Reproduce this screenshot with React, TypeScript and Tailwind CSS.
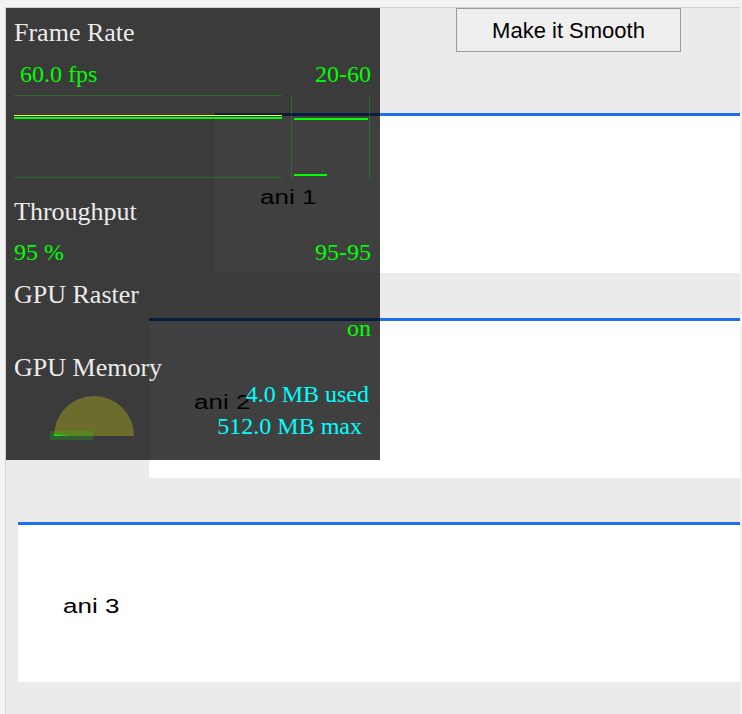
const serif = "font-['Liberation_Serif','Times_New_Roman',serif]";
const sans = "font-['Liberation_Sans',Arial,sans-serif]";

const GREEN_LINE = "rgba(0,255,0,0.22)";

function FrameGraph() {
  return (
    <svg width="358" height="86" viewBox="0 0 358 86" className="block">
      <line x1="0" y1="0.5" x2="268" y2="0.5" stroke={GREEN_LINE} strokeWidth="1" />
      <line x1="0" y1="82.5" x2="268" y2="82.5" stroke={GREEN_LINE} strokeWidth="1" />
      <line x1="0" y1="20.5" x2="268" y2="20.5" stroke="#f2f23a" strokeWidth="1" />
      <rect x="0" y="22" width="268" height="2" fill="#00ff00" />
      <line x1="277.5" y1="1" x2="277.5" y2="85" stroke={GREEN_LINE} strokeWidth="1" />
      <line x1="355.5" y1="1" x2="355.5" y2="85" stroke={GREEN_LINE} strokeWidth="1" />
      <rect x="280" y="23" width="74" height="2" fill="#00ff00" />
      <rect x="280" y="79" width="33" height="2" fill="#00ff00" />
    </svg>
  );
}

function MemoryGauge() {
  return (
    <svg width="130" height="60" viewBox="0 0 130 60" className="block shrink-0">
      <defs>
        <linearGradient id="usedFade" x1="0" x2="1" y1="0" y2="0">
          <stop offset="0" stopColor="#00ff00" stopOpacity="1" />
          <stop offset="1" stopColor="#00ff00" stopOpacity="0" />
        </linearGradient>
      </defs>
      <path d="M40 54 A40 40 0 0 1 120 54 Z" fill="rgba(255,255,0,0.25)" />
      <rect x="36" y="49" width="43" height="9" fill="rgba(0,255,0,0.18)" />
      <rect x="40" y="52.5" width="16" height="1.5" fill="url(#usedFade)" />
    </svg>
  );
}

function Meter() {
  return (
    <div
      className={`absolute left-0 top-0 w-[374px] h-[452px] bg-[rgba(0,0,0,0.75)] pt-[10px] pl-[8px] pr-[9px] ${serif}`}
    >
      <div className="text-[26px] leading-[30px] text-[#ececec]">Frame Rate</div>
      <div className="mt-[11px] flex justify-between text-[24px] leading-[30px] text-[#00ff00]">
        <span className="pl-[6px]">60.0 fps</span>
        <span>20-60</span>
      </div>
      <div className="mt-[6px]">
        <FrameGraph />
      </div>
      <div className="mt-[16px] text-[26px] leading-[30px] text-[#ececec]">Throughput</div>
      <div className="mt-[10px] flex justify-between text-[24px] leading-[30px] text-[#00ff00]">
        <span>95 %</span>
        <span>95-95</span>
      </div>
      <div className="mt-[13px] text-[26px] leading-[30px] text-[#ececec]">GPU Raster</div>
      <div className="mt-[3px] text-right text-[24px] leading-[30px] text-[#00ff00]">on</div>
      <div className="mt-[11px] text-[26px] leading-[28px] text-[#ececec]">GPU Memory</div>
      <div className="flex justify-between">
        <MemoryGauge />
        <div className="flex flex-col items-end text-[24px] leading-[24px] text-[#00ffff]">
          <span className="pr-[2px]">4.0 MB used</span>
          <span className="mt-[8px] pr-[9px]">512.0 MB max</span>
        </div>
      </div>
    </div>
  );
}

function AniBox({ label, offset }: { label: string; offset: string }) {
  return (
    <div
      className={`${offset} h-[160px] border-t-[3px] border-[#1b6ff0] bg-white flex items-center pl-[45px] pt-[5px]`}
    >
      <span className={`${sans} text-[20px] text-black inline-block origin-left scale-x-[1.3]`}>
        {label}
      </span>
    </div>
  );
}

export default function App() {
  return (
    <div className="w-[742px] h-[714px] bg-[#f3f3f3] pt-[7px] pl-[5px] pr-[2px] overflow-hidden">
      <div className="relative h-full border-l border-t border-[#d4d4d4] bg-[#ebebeb] overflow-hidden">
        <button
          className={`ml-[450px] block w-[225px] h-[44px] border border-[#9a9a9a] bg-[#efefef] text-[22px] text-black ${sans}`}
        >
          Make it Smooth
        </button>
        <AniBox label="ani 1" offset="mt-[61px] ml-[209px]" />
        <AniBox label="ani 2" offset="mt-[45px] ml-[143px]" />
        <AniBox label="ani 3" offset="mt-[44px] ml-[12px]" />
        <Meter />
      </div>
    </div>
  );
}
